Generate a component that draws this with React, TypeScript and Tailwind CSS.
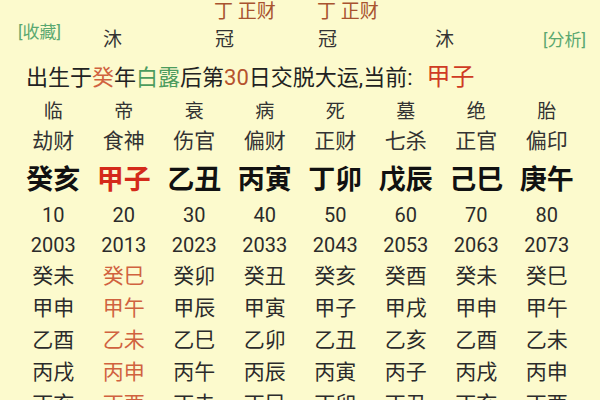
const stages = ["临", "帝", "衰", "病", "死", "墓", "绝", "胎"];
const gods = ["劫财", "食神", "伤官", "偏财", "正财", "七杀", "正官", "偏印"];
const pillars = ["癸亥", "甲子", "乙丑", "丙寅", "丁卯", "戊辰", "己巳", "庚午"];
const ages = [10, 20, 30, 40, 50, 60, 70, 80];
const years = [2003, 2013, 2023, 2033, 2043, 2053, 2063, 2073];
const liunian = [
  ["癸未", "癸巳", "癸卯", "癸丑", "癸亥", "癸酉", "癸未", "癸巳"],
  ["甲申", "甲午", "甲辰", "甲寅", "甲子", "甲戌", "甲申", "甲午"],
  ["乙酉", "乙未", "乙巳", "乙卯", "乙丑", "乙亥", "乙酉", "乙未"],
  ["丙戌", "丙申", "丙午", "丙辰", "丙寅", "丙子", "丙戌", "丙申"],
  ["丁亥", "丁酉", "丁未", "丁巳", "丁卯", "丁丑", "丁亥", "丁酉"],
];

// current luck pillar column
const CUR = 1;

function Row({ items, className, curClass }: { items: (string | number)[]; className: string; curClass?: string }) {
  return (
    <div className={`grid grid-cols-8 px-[18px] ${className}`}>
      {items.map((t, i) => (
        <div key={i} className={`flex items-center justify-center ${i === CUR && curClass ? curClass : ""}`}>
          {t}
        </div>
      ))}
    </div>
  );
}

export default function App() {
  return (
    <div
      className="h-[400px] w-[600px] overflow-hidden bg-[#fcfacd] text-[#2b2b2b]"
      style={{ fontFamily: "Roboto, 'Noto Sans CJK SC', sans-serif" }}
    >
      {/* top: pillar hints */}
      <div className="flex h-[56px]">
        <div className="w-[103px] pl-[18px] pt-[22px] text-[17px] leading-[20px] text-[#5aa870]">[收藏]</div>
        <div className="flex flex-col">
          <div className="flex h-[24px] items-center text-[19px] text-[#a8532f]">
            <div className="w-[111px]" />
            <div className="w-[103px] whitespace-nowrap">丁 正财</div>
            <div className="w-[117px] whitespace-nowrap">丁 正财</div>
            <div className="w-[108px]" />
          </div>
          <div className="flex h-[32px] items-center text-[19px] text-[#333]">
            <div className="w-[112px]">沐</div>
            <div className="w-[103px]">冠</div>
            <div className="w-[117px]">冠</div>
            <div className="w-[108px]">沐</div>
          </div>
        </div>
        <div className="pt-[30px] text-[17px] leading-[20px] text-[#5aa870]">[分析]</div>
      </div>

      {/* birth info */}
      <div className="flex h-[42px] items-center whitespace-nowrap pl-[26px] text-[22px] text-[#222]">
        出生于<span className="text-[#d0623f]">癸</span>年<span className="text-[#4c9c5e]">白露</span>后第
        <span className="text-[#b5522e]">30</span>日交脱大运,当前:
        <span className="ml-[14px] text-[24px] text-[#cf3b24]">甲子</span>
      </div>

      <Row items={stages} className="h-[26px] text-[19px] text-[#333]" />
      <Row items={gods} className="h-[36px] text-[21px] text-[#333]" />
      <Row
        items={pillars}
        className="h-[40px] text-[27px] font-bold text-[#111]"
        curClass="text-[#d42a1a]"
      />
      <Row items={ages} className="h-[29px] text-[20px] text-[#2b2b2b]" />
      <Row items={years} className="h-[32px] text-[20px] text-[#2b2b2b]" />
      {liunian.map((r, i) => (
        <Row key={i} items={r} className="h-[32px] text-[21px] text-[#2b2b2b]" curClass="text-[#d0623f]" />
      ))}
    </div>
  );
}
